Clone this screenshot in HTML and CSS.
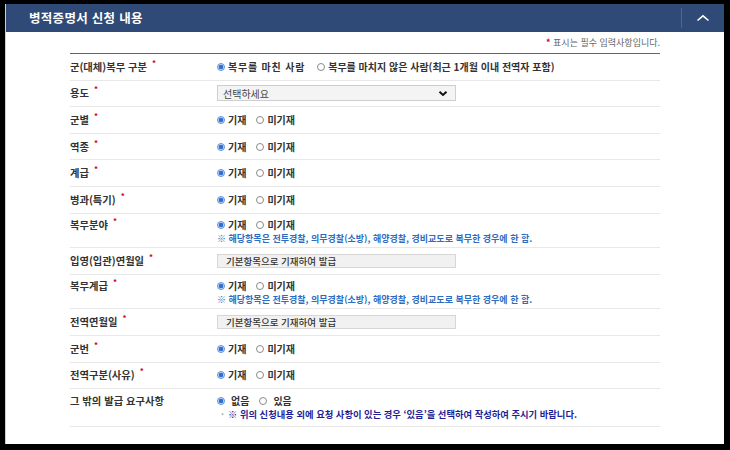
FILE: index.html
```html
<!DOCTYPE html>
<html lang="ko">
<head>
<meta charset="utf-8">
<title>병적증명서 신청 내용</title>
<link rel="stylesheet" href="styles.css">
</head>
<body>
<section class="panel">
  <header class="panel-head">
    <h2 class="panel-title">병적증명서 신청 내용</h2>
    <button class="toggle" type="button" aria-label="접기">
      <svg width="14" height="8" viewBox="0 0 14 8"><path d="M1.5 6.5 L7 1.8 L12.5 6.5" fill="none" stroke="#fff" stroke-width="1.6"/></svg>
    </button>
  </header>
  <div class="panel-body">
    <p class="req-note"><span class="star">*</span> 표시는 필수 입력사항입니다.</p>
    <div class="form">
      <div class="row">
        <div class="label">군(대체)복무 구분<span class="req">*</span></div>
        <div class="value"><div class="opts">
          <span class="opt opt-wide"><i class="radio on"></i>복무를 마친 사람</span>
          <span class="opt"><i class="radio"></i>복무를 마치지 않은 사람(최근 1개월 이내 전역자 포함)</span>
        </div></div>
      </div>
      <div class="row">
        <div class="label">용도<span class="req">*</span></div>
        <div class="value"><div class="select"><span>선택하세요</span>
          <svg width="10" height="7" viewBox="0 0 10 7"><path d="M1.5 1.8 L5 5 L8.5 1.8" fill="none" stroke="#111" stroke-width="2"/></svg>
        </div></div>
      </div>
      <div class="row">
        <div class="label">군별<span class="req">*</span></div>
        <div class="value"><div class="opts"><span class="opt"><i class="radio on"></i>기재</span><span class="opt"><i class="radio"></i>미기재</span></div></div>
      </div>
      <div class="row">
        <div class="label">역종<span class="req">*</span></div>
        <div class="value"><div class="opts"><span class="opt"><i class="radio on"></i>기재</span><span class="opt"><i class="radio"></i>미기재</span></div></div>
      </div>
      <div class="row">
        <div class="label">계급<span class="req">*</span></div>
        <div class="value"><div class="opts"><span class="opt"><i class="radio on"></i>기재</span><span class="opt"><i class="radio"></i>미기재</span></div></div>
      </div>
      <div class="row">
        <div class="label">병과(특기)<span class="req">*</span></div>
        <div class="value"><div class="opts"><span class="opt"><i class="radio on"></i>기재</span><span class="opt"><i class="radio"></i>미기재</span></div></div>
      </div>
      <div class="row row-double">
        <div class="label">복무분야<span class="req">*</span></div>
        <div class="value">
          <div class="opts"><span class="opt"><i class="radio on"></i>기재</span><span class="opt"><i class="radio"></i>미기재</span></div>
          <p class="note">※ 해당항목은 전투경찰, 의무경찰(소방), 해양경찰, 경비교도로 복무한 경우에 한 함.</p>
        </div>
      </div>
      <div class="row">
        <div class="label">입영(입관)연월일<span class="req">*</span></div>
        <div class="value"><div class="field">기본항목으로 기재하여 발급</div></div>
      </div>
      <div class="row row-double">
        <div class="label">복무계급<span class="req">*</span></div>
        <div class="value">
          <div class="opts"><span class="opt"><i class="radio on"></i>기재</span><span class="opt"><i class="radio"></i>미기재</span></div>
          <p class="note">※ 해당항목은 전투경찰, 의무경찰(소방), 해양경찰, 경비교도로 복무한 경우에 한 함.</p>
        </div>
      </div>
      <div class="row">
        <div class="label">전역연월일<span class="req">*</span></div>
        <div class="value"><div class="field">기본항목으로 기재하여 발급</div></div>
      </div>
      <div class="row">
        <div class="label">군번<span class="req">*</span></div>
        <div class="value"><div class="opts"><span class="opt"><i class="radio on"></i>기재</span><span class="opt"><i class="radio"></i>미기재</span></div></div>
      </div>
      <div class="row">
        <div class="label">전역구분(사유)<span class="req">*</span></div>
        <div class="value"><div class="opts"><span class="opt"><i class="radio on"></i>기재</span><span class="opt"><i class="radio"></i>미기재</span></div></div>
      </div>
      <div class="row row-last">
        <div class="label">그 밖의 발급 요구사항</div>
        <div class="value">
          <div class="opts opts-spaced"><span class="opt"><i class="radio on"></i>없음</span><span class="opt"><i class="radio"></i>있음</span></div>
          <p class="note note-strong"><span class="dot">·</span>※ 위의 신청내용 외에 요청 사항이 있는 경우 ‘있음’을 선택하여 작성하여 주시기 바랍니다.</p>
        </div>
      </div>
    </div>
  </div>
</section>
</body>
</html>
```

FILE: styles.css
```css
html, body {
  margin: 0;
  padding: 0;
}
body {
  background: #000;
  font-family: "Noto Sans CJK KR", "Noto Sans", sans-serif;
  color: #333;
  width: 730px;
  height: 450px;
  overflow: hidden;
}
.panel {
  margin: 4px 6px 0 5px;
  height: 440px;
  background: #fff;
  border-left: 1px solid #cfcfcf;
  box-sizing: border-box;
  overflow: hidden;
}
.panel-head {
  height: 28px;
  background: #2f4a76;
  display: flex;
  align-items: center;
  padding-left: 23px;
}
.panel-title {
  margin: 0;
  color: #fff;
  font-size: 12.5px;
  font-weight: 700;
  line-height: 1;
  letter-spacing: 0.3px;
}
.toggle {
  margin-left: auto;
  width: 43px;
  height: 20px;
  padding: 0;
  border: 0;
  border-left: 1px solid #4d6692;
  background: transparent;
  display: flex;
  align-items: center;
  justify-content: center;
}
.panel-body {
  padding: 0 64px;
}
.req-note {
  margin: 0;
  padding: 5px 0 4px;
  text-align: right;
  font-size: 9px;
  line-height: 12px;
  color: #666;
}
.star {
  color: #d0021b;
  font-weight: 700;
}
.form {
  border-top: 1px solid #666;
}
.row {
  display: grid;
  grid-template-columns: 147px 1fr;
  align-items: center;
  height: 26.6px;
  box-sizing: border-box;
  border-bottom: 1px solid #e8e8e8;
}
.row-double {
  height: 34.6px;
  align-items: start;
  padding-top: 4px;
}
.row-last {
  height: 38px;
  align-items: start;
  padding-top: 5px;
}
.label {
  font-size: 10.3px;
  font-weight: 700;
  color: #333;
  line-height: 14px;
  white-space: nowrap;
}
.req {
  color: #d0021b;
  font-weight: 700;
  font-size: 8px;
  margin-left: 5px;
  vertical-align: 5px;
  line-height: 0;
}
.value {
  min-width: 0;
}
.opts {
  display: flex;
  align-items: center;
  gap: 10px;
  font-size: 10px;
  font-weight: 700;
  line-height: 14px;
  color: #333;
  white-space: nowrap;
}
.opt {
  display: inline-flex;
  align-items: center;
  gap: 2px;
}
.opt-wide {
  letter-spacing: 0.8px;
  margin-right: 2px;
}
.opts-spaced .opt {
  gap: 5px;
}
.radio {
  width: 8px;
  height: 8px;
  border-radius: 50%;
  border: 1px solid #8a8a8a;
  background: #fff;
  box-sizing: border-box;
  flex: none;
  margin-right: 1px;
}
.radio.on {
  border-color: #5b8fd8;
  background: radial-gradient(circle, #2f6fd0 0, #2f6fd0 2px, #cfe0f7 2.6px, #cfe0f7 100%);
}
.select {
  width: 239px;
  height: 16px;
  box-sizing: border-box;
  border: 1px solid #cfcfcf;
  background: #f4f4f4;
  display: flex;
  align-items: center;
  justify-content: space-between;
  padding: 0 7px 0 5px;
  font-size: 10px;
  color: #444;
}
.field {
  width: 239px;
  height: 14px;
  box-sizing: border-box;
  border: 1px solid #d6d6d6;
  background: #f1f1f1;
  padding-left: 8px;
  font-size: 9.5px;
  line-height: 12px;
  font-weight: 500;
  color: #333;
  white-space: nowrap;
}
.note {
  margin: 0;
  font-size: 9px;
  line-height: 13px;
  color: #2e6cc0;
  font-weight: 700;
  white-space: nowrap;
}
.note-strong {
  color: #1e1e96;
  font-size: 9.3px;
}
.dot {
  color: #aaa;
  display: inline-block;
  width: 11px;
  text-align: center;
}
```
